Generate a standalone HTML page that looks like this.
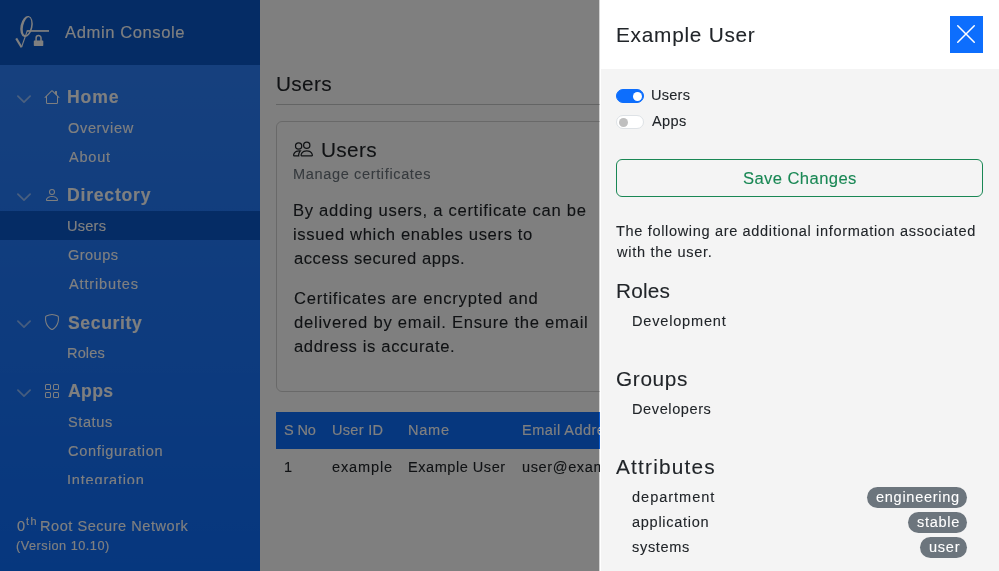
<!DOCTYPE html>
<html><head><meta charset="utf-8"><style>
html,body{margin:0;padding:0;width:999px;height:571px;overflow:hidden;background:#fff;}
body{font-family:"Liberation Sans",sans-serif;position:relative;}
.t{position:absolute;white-space:nowrap;font-family:"Liberation Sans",sans-serif;will-change:transform;-webkit-text-stroke:0.1px currentColor;}
.i{position:absolute;display:block;}
#side{position:absolute;left:0;top:0;width:260px;height:571px;background-color:#0d6efd;
 background-image:linear-gradient(180deg,rgba(255,255,255,.15),rgba(255,255,255,0));overflow:hidden;}
#sh{position:absolute;left:0;top:0;width:260px;height:65px;background:#0a58ca;}
#act{position:absolute;left:0;top:211px;width:260px;height:29px;background:#0a58ca;}
#navclip{position:absolute;left:0;top:65px;width:260px;height:419px;overflow:hidden;}
#navclip>*{margin-top:-65px;}
#main{position:absolute;left:260px;top:0;width:739px;height:571px;background:#fff;}
#main>*{margin-left:-260px;}
#hr{position:absolute;left:276px;top:104px;width:707px;height:1px;background:rgba(33,37,41,.25);}
#card{position:absolute;left:276px;top:121px;width:705px;height:269px;border:1px solid rgba(0,0,0,.175);border-radius:6px;}
#thead{position:absolute;left:276px;top:412px;width:707px;height:37px;background:#0d6efd;}
#overlay{position:absolute;left:0;top:0;width:599px;height:571px;background:rgba(0,0,0,.5);}
#oc{position:absolute;left:599px;top:0;width:400px;height:571px;background:#fff;background-clip:padding-box;border-left:1px solid rgba(0,0,0,.175);box-sizing:border-box;}
#oc>*{margin-left:-600px;}
#ocb{position:absolute;left:601px;top:69px;width:398px;height:502px;background:#f4f4f4;}
#close{position:absolute;left:950px;top:16px;width:33px;height:37px;background:#0d6efd;}
.sw{position:absolute;left:616px;width:28px;height:14px;border-radius:7px;box-sizing:border-box;}
.sw.on{background:#0d6efd;border:1px solid #0d6efd;}
.sw.off{background:#fff;border:1px solid #dee2e6;}
.sw i{position:absolute;top:1.5px;width:9.4px;height:9.4px;border-radius:50%;}
.sw.on i{left:15.5px;background:#fff;}
.sw.off i{left:1.6px;background:#bfbfbf;}
#btn{position:absolute;left:616px;top:159px;width:367px;height:38px;border:1px solid #198754;border-radius:6px;box-sizing:border-box;}
.badge{position:absolute;height:21px;border-radius:11px;background:#6c757d;}
</style></head>
<body>
<div id="side">
<div id="sh"></div>
<div id="act"></div>
<svg class="i" style="left:0;top:0" width="60" height="60" viewBox="0 0 60 60">
<path d="M16.2 38.4 L21.5 47.3" stroke="#fff" stroke-width="2.1" fill="none"/>
<path d="M21.5 47.3 L27.3 30.8" stroke="#fff" stroke-width="1.1" fill="none"/>
<g transform="rotate(12 26.5 26.45)">
<path fill="#fff" fill-rule="evenodd" d="M20.5 26.45 a6 10.7 0 1 0 12 0 a6 10.7 0 1 0 -12 0 Z M23.1 26.25 a3.9 9.2 0 1 0 7.8 0 a3.9 9.2 0 1 0 -7.8 0 Z"/>
</g>
<path d="M36.1 41 V38 A2.45 2.45 0 0 1 41 38 V41" stroke="#fff" stroke-width="1.5" fill="none"/>
<rect x="26.8" y="30.1" width="22.2" height="1.7" fill="#fff"/>
<rect x="33.8" y="40.4" width="9.5" height="5.5" rx="0.6" fill="#fff"/>
</svg>
<div class="t" style="left:64.87px;top:23.00px;font-size:16.64px;line-height:19px;letter-spacing:0.569px;font-weight:400;color:#ffffff;">Admin Console</div>
<div id="navclip">
<svg class="i" style="left:0;top:84px" width="40" height="26"><polyline points="17.9,12.1 24,18.1 30.1,12.1" fill="none" stroke="rgba(255,255,255,.5)" stroke-width="1.7" stroke-linecap="round" stroke-linejoin="round"/></svg>
<svg class="i" style="left:44px;top:89px;" width="16" height="16" viewBox="0 0 16 16"><path fill="#ffffff" d="M8.707 1.5a1 1 0 0 0-1.414 0L.646 8.146a.5.5 0 0 0 .708.708L2 8.207V13.5A1.5 1.5 0 0 0 3.5 15h9a1.5 1.5 0 0 0 1.5-1.5V8.207l.646.647a.5.5 0 0 0 .708-.708L13 5.793V2.5a.5.5 0 0 0-.5-.5h-1a.5.5 0 0 0-.5.5v1.293zM13 7.207V13.5a.5.5 0 0 1-.5.5h-9a.5.5 0 0 1-.5-.5V7.207l5-5z"/></svg>
<div class="t" style="left:67.42px;top:87.00px;font-size:17.60px;line-height:20px;letter-spacing:0.848px;font-weight:700;color:#ffffff;">Home</div>
<div class="t" style="left:67.91px;top:120.00px;font-size:14.56px;line-height:16px;letter-spacing:0.645px;font-weight:400;color:#ffffff;">Overview</div>
<div class="t" style="left:68.57px;top:149.00px;font-size:14.56px;line-height:16px;letter-spacing:0.758px;font-weight:400;color:#ffffff;">About</div>
<svg class="i" style="left:0;top:182px" width="40" height="26"><polyline points="17.9,12.1 24,18.1 30.1,12.1" fill="none" stroke="rgba(255,255,255,.5)" stroke-width="1.7" stroke-linecap="round" stroke-linejoin="round"/></svg>
<svg class="i" style="left:44px;top:187px;" width="16" height="16" viewBox="0 0 16 16"><path fill="#ffffff" d="M8 8a3 3 0 1 0 0-6 3 3 0 0 0 0 6m2-3a2 2 0 1 1-4 0 2 2 0 0 1 4 0m4 8c0 1-1 1-1 1H3s-1 0-1-1 1-4 6-4 6 3 6 4m-1-.004c-.001-.246-.154-.986-.832-1.664C11.516 10.68 10.289 10 8 10s-3.516.68-4.168 1.332c-.678.678-.83 1.418-.832 1.664z"/></svg>
<div class="t" style="left:67.42px;top:185.00px;font-size:17.60px;line-height:20px;letter-spacing:0.774px;font-weight:700;color:#ffffff;">Directory</div>
<div class="t" style="left:67.48px;top:218.00px;font-size:14.56px;line-height:16px;letter-spacing:0.233px;font-weight:400;color:#ffffff;">Users</div>
<div class="t" style="left:67.87px;top:247.00px;font-size:14.56px;line-height:16px;letter-spacing:0.453px;font-weight:400;color:#ffffff;">Groups</div>
<div class="t" style="left:68.57px;top:276.00px;font-size:14.56px;line-height:16px;letter-spacing:0.846px;font-weight:400;color:#ffffff;">Attributes</div>
<svg class="i" style="left:0;top:309px" width="40" height="26"><polyline points="17.9,12.1 24,18.1 30.1,12.1" fill="none" stroke="rgba(255,255,255,.5)" stroke-width="1.7" stroke-linecap="round" stroke-linejoin="round"/></svg>
<svg class="i" style="left:44px;top:314px;" width="16" height="16" viewBox="0 0 16 16"><path fill="#ffffff" d="M5.338 1.59a61 61 0 0 0-2.837.856.48.48 0 0 0-.328.39c-.554 4.157.726 7.19 2.253 9.188a10.7 10.7 0 0 0 2.287 2.233c.346.244.652.42.893.533q.18.085.293.118a1 1 0 0 0 .101.025 1 1 0 0 0 .1-.025q.114-.034.294-.118c.24-.113.547-.29.893-.533a10.7 10.7 0 0 0 2.287-2.233c1.527-1.997 2.807-5.031 2.253-9.188a.48.48 0 0 0-.328-.39c-.651-.213-1.75-.56-2.837-.855C9.552 1.29 8.531 1.067 8 1.067c-.53 0-1.552.223-2.662.524zM5.072.56C6.157.265 7.31 0 8 0s1.843.265 2.928.56c1.11.3 2.229.655 2.887.87a1.54 1.54 0 0 1 1.044 1.262c.596 4.477-.787 7.795-2.465 9.99a11.8 11.8 0 0 1-2.517 2.453 7 7 0 0 1-1.048.625c-.28.132-.581.24-.829.24s-.548-.108-.829-.24a7 7 0 0 1-1.048-.625 11.8 11.8 0 0 1-2.517-2.453C1.928 10.487.545 7.169 1.141 2.692A1.540 1.540 0 0 1 2.185 1.43 63 63 0 0 1 5.072.56"/></svg>
<div class="t" style="left:68.09px;top:313.00px;font-size:17.60px;line-height:20px;letter-spacing:0.630px;font-weight:700;color:#ffffff;">Security</div>
<div class="t" style="left:67.41px;top:345.00px;font-size:14.56px;line-height:16px;letter-spacing:0.132px;font-weight:400;color:#ffffff;">Roles</div>
<svg class="i" style="left:0;top:378px" width="40" height="26"><polyline points="17.9,12.1 24,18.1 30.1,12.1" fill="none" stroke="rgba(255,255,255,.5)" stroke-width="1.7" stroke-linecap="round" stroke-linejoin="round"/></svg>
<svg class="i" style="left:44px;top:383px;" width="16" height="16" viewBox="0 0 16 16"><path fill="#ffffff" d="M1 2.5A1.5 1.5 0 0 1 2.5 1h3A1.5 1.5 0 0 1 7 2.5v3A1.5 1.5 0 0 1 5.5 7h-3A1.5 1.5 0 0 1 1 5.5zM2.5 2a.5.5 0 0 0-.5.5v3a.5.5 0 0 0 .5.5h3a.5.5 0 0 0 .5-.5v-3a.5.5 0 0 0-.5-.5zm6.5.5A1.5 1.5 0 0 1 10.5 1h3A1.5 1.5 0 0 1 15 2.5v3A1.5 1.5 0 0 1 13.5 7h-3A1.5 1.5 0 0 1 9 5.5zm1.5-.5a.5.5 0 0 0-.5.5v3a.5.5 0 0 0 .5.5h3a.5.5 0 0 0 .5-.5v-3a.5.5 0 0 0-.5-.5zM1 10.5A1.5 1.5 0 0 1 2.5 9h3A1.5 1.5 0 0 1 7 10.5v3A1.5 1.5 0 0 1 5.5 15h-3A1.5 1.5 0 0 1 1 13.5zm1.5-.5a.5.5 0 0 0-.5.5v3a.5.5 0 0 0 .5.5h3a.5.5 0 0 0 .5-.5v-3a.5.5 0 0 0-.5-.5zm6.5.5A1.5 1.5 0 0 1 10.5 9h3a1.5 1.5 0 0 1 1.5 1.5v3a1.5 1.5 0 0 1-1.5 1.5h-3A1.5 1.5 0 0 1 9 13.5zm1.5-.5a.5.5 0 0 0-.5.5v3a.5.5 0 0 0 .5.5h3a.5.5 0 0 0 .5-.5v-3a.5.5 0 0 0-.5-.5z"/></svg>
<div class="t" style="left:68.16px;top:381.00px;font-size:17.60px;line-height:20px;letter-spacing:0.379px;font-weight:700;color:#ffffff;">Apps</div>
<div class="t" style="left:67.94px;top:414.00px;font-size:14.56px;line-height:16px;letter-spacing:0.583px;font-weight:400;color:#ffffff;">Status</div>
<div class="t" style="left:67.86px;top:443.00px;font-size:14.56px;line-height:16px;letter-spacing:0.671px;font-weight:400;color:#ffffff;">Configuration</div>
<div class="t" style="left:67.26px;top:472.00px;font-size:14.56px;line-height:16px;letter-spacing:0.806px;font-weight:400;color:#ffffff;">Integration</div>
</div>
<div class="t" style="left:16.53px;top:518.00px;font-size:14.56px;line-height:16px;letter-spacing:0.095px;font-weight:400;color:#ffffff;">0</div>
<div class="t" style="left:26.03px;top:515.00px;font-size:10.92px;line-height:12px;letter-spacing:1.365px;font-weight:400;color:#ffffff;">th</div>
<div class="t" style="left:40.21px;top:518.00px;font-size:14.56px;line-height:16px;letter-spacing:0.529px;font-weight:400;color:#ffffff;">Root Secure Network</div>
<div class="t" style="left:16.41px;top:538.00px;font-size:12.74px;line-height:15px;letter-spacing:0.492px;font-weight:400;color:#ffffff;">(Version 10.10)</div>
</div>
<div id="main">
<div class="t" style="left:276.00px;top:72.00px;font-size:20.80px;line-height:23px;letter-spacing:0.333px;font-weight:400;color:#212529;">Users</div>
<div id="hr"></div>
<div id="card"></div>
<svg class="i" style="left:293px;top:139px;" width="20" height="20" viewBox="0 0 16 16"><path fill="#212529" d="M15 14s1 0 1-1-1-4-5-4-5 3-5 4 1 1 1 1zm-7.978-1L7 12.996c.001-.264.167-1.03.76-1.72C8.312 10.629 9.282 10 11 10c1.717 0 2.687.63 3.24 1.276.593.69.758 1.457.76 1.72l-.008.002-.014.002zM11 7a2 2 0 1 0 0-4 2 2 0 0 0 0 4m3-2a3 3 0 1 1-6 0 3 3 0 0 1 6 0M6.936 9.28a6 6 0 0 0-1.23-.247A7 7 0 0 0 5 9c-4 0-5 3-5 4q0 1 1 1h4.216A2.24 2.24 0 0 1 5 13c0-1.010.377-2.042 1.090-2.904.243-.294.526-.569.846-.816M4.92 10A5.5 5.5 0 0 0 4 13H1c0-.26.164-1.03.76-1.724.545-.636 1.492-1.256 3.16-1.275ZM1.5 5.5a3 3 0 1 1 6 0 3 3 0 0 1-6 0m3-2a2 2 0 1 0 0 4 2 2 0 0 0 0-4"/></svg>
<div class="t" style="left:321.00px;top:138.00px;font-size:20.80px;line-height:23px;letter-spacing:0.333px;font-weight:400;color:#212529;">Users</div>
<div class="t" style="left:292.91px;top:166.00px;font-size:14.56px;line-height:16px;letter-spacing:0.634px;font-weight:400;color:#6c757d;">Manage certificates</div>
<div class="t" style="left:293.04px;top:201.00px;font-size:16.64px;line-height:19px;letter-spacing:0.691px;font-weight:400;color:#212529;">By adding users, a certificate can be</div>
<div class="t" style="left:293.29px;top:225.00px;font-size:16.64px;line-height:19px;letter-spacing:0.626px;font-weight:400;color:#212529;">issued which enables users to</div>
<div class="t" style="left:293.69px;top:249.00px;font-size:16.64px;line-height:19px;letter-spacing:0.522px;font-weight:400;color:#212529;">access secured apps.</div>
<div class="t" style="left:293.56px;top:289.00px;font-size:16.64px;line-height:19px;letter-spacing:0.754px;font-weight:400;color:#212529;">Certificates are encrypted and</div>
<div class="t" style="left:293.70px;top:313.00px;font-size:16.64px;line-height:19px;letter-spacing:0.737px;font-weight:400;color:#212529;">delivered by email. Ensure the email</div>
<div class="t" style="left:293.69px;top:337.00px;font-size:16.64px;line-height:19px;letter-spacing:0.627px;font-weight:400;color:#212529;">address is accurate.</div>
<div id="thead"></div>
<div class="t" style="left:284.34px;top:422.00px;font-size:14.56px;line-height:16px;letter-spacing:-0.137px;font-weight:400;color:#ffffff;">S No</div>
<div class="t" style="left:331.98px;top:422.00px;font-size:14.56px;line-height:16px;letter-spacing:0.283px;font-weight:400;color:#ffffff;">User ID</div>
<div class="t" style="left:408.41px;top:422.00px;font-size:14.56px;line-height:16px;letter-spacing:0.729px;font-weight:400;color:#ffffff;">Name</div>
<div class="t" style="left:522.41px;top:422.00px;font-size:14.56px;line-height:16px;letter-spacing:0.450px;font-weight:400;color:#ffffff;">Email Address</div>
<div class="t" style="left:284.49px;top:459.00px;font-size:14.56px;line-height:16px;letter-spacing:-0.200px;font-weight:400;color:#212529;">1</div>
<div class="t" style="left:332.48px;top:459.00px;font-size:14.56px;line-height:16px;letter-spacing:0.870px;font-weight:400;color:#212529;">example</div>
<div class="t" style="left:408.41px;top:459.00px;font-size:14.56px;line-height:16px;letter-spacing:0.521px;font-weight:400;color:#212529;">Example User</div>
<div class="t" style="left:522.15px;top:459.00px;font-size:14.56px;line-height:16px;letter-spacing:0.615px;font-weight:400;color:#212529;">user@example.com</div>
</div>
<div id="overlay"></div>
<div id="oc">
<div id="ocb"></div>
<div class="t" style="left:615.99px;top:23.00px;font-size:20.80px;line-height:23px;letter-spacing:0.744px;font-weight:400;color:#212529;">Example User</div>
<div id="close"></div>
<svg class="i" style="left:954.2px;top:21.6px;" width="24" height="24" viewBox="0 0 16 16"><path fill="#fff" d="M2.146 2.854a.5.5 0 1 1 .708-.708L8 7.293l5.146-5.147a.5.5 0 0 1 .708.708L8.707 8l5.147 5.146a.5.5 0 0 1-.708.708L8 8.707l-5.146 5.147a.5.5 0 0 1-.708-.708L7.293 8z"/></svg>
<div class="sw on" style="top:89px"><i></i></div>
<div class="sw off" style="top:115px"><i></i></div>
<div class="t" style="left:650.88px;top:87.00px;font-size:14.56px;line-height:16px;letter-spacing:0.233px;font-weight:400;color:#212529;">Users</div>
<div class="t" style="left:651.97px;top:113.00px;font-size:14.56px;line-height:16px;letter-spacing:0.407px;font-weight:400;color:#212529;">Apps</div>
<div id="btn"></div>
<div class="t" style="left:742.74px;top:169.00px;font-size:16.64px;line-height:19px;letter-spacing:0.392px;font-weight:400;color:#198754;">Save Changes</div>
<div class="t" style="left:616.47px;top:223.00px;font-size:14.56px;line-height:16px;letter-spacing:0.654px;font-weight:400;color:#212529;">The following are additional information associated</div>
<div class="t" style="left:616.82px;top:244.00px;font-size:14.56px;line-height:16px;letter-spacing:0.706px;font-weight:400;color:#212529;">with the user.</div>
<div class="t" style="left:616.09px;top:279.00px;font-size:20.80px;line-height:23px;letter-spacing:0.189px;font-weight:400;color:#212529;">Roles</div>
<div class="t" style="left:632.21px;top:312.50px;font-size:14.56px;line-height:16px;letter-spacing:0.805px;font-weight:400;color:#212529;">Development</div>
<div class="t" style="left:615.75px;top:366.50px;font-size:20.80px;line-height:23px;letter-spacing:0.647px;font-weight:400;color:#212529;">Groups</div>
<div class="t" style="left:632.21px;top:400.50px;font-size:14.56px;line-height:16px;letter-spacing:0.590px;font-weight:400;color:#212529;">Developers</div>
<div class="t" style="left:615.96px;top:455.00px;font-size:20.80px;line-height:23px;letter-spacing:1.209px;font-weight:400;color:#212529;">Attributes</div>
<div class="t" style="left:632.49px;top:488.50px;font-size:14.56px;line-height:16px;letter-spacing:0.976px;font-weight:400;color:#212529;">department</div>
<div class="t" style="left:632.48px;top:513.50px;font-size:14.56px;line-height:16px;letter-spacing:0.714px;font-weight:400;color:#212529;">application</div>
<div class="t" style="left:631.99px;top:538.50px;font-size:14.56px;line-height:16px;letter-spacing:0.667px;font-weight:400;color:#212529;">systems</div>
<div class="badge" style="left:867px;top:487px;width:100px"></div>
<div class="badge" style="left:908px;top:512px;width:59px"></div>
<div class="badge" style="left:920px;top:537px;width:47px"></div>
<div class="t" style="left:876.18px;top:489.00px;font-size:14.56px;line-height:16px;letter-spacing:0.718px;font-weight:400;color:#fff;">engineering</div>
<div class="t" style="left:916.79px;top:514.00px;font-size:14.56px;line-height:16px;letter-spacing:0.689px;font-weight:400;color:#fff;">stable</div>
<div class="t" style="left:928.65px;top:539.00px;font-size:14.56px;line-height:16px;letter-spacing:0.737px;font-weight:400;color:#fff;">user</div>
</div>
</body></html>
